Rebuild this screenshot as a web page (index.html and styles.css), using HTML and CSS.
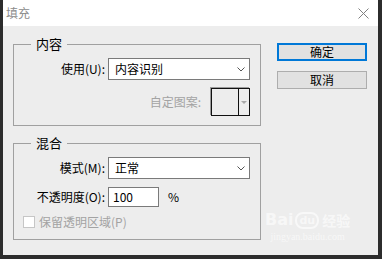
FILE: index.html
```html
<!DOCTYPE html>
<html lang="zh-CN">
<head>
    <meta charset="UTF-8">
    <title>填充</title>
    <link rel="stylesheet" href="styles.css">
</head>
<body>
    <div class="dialog">
        <div class="titlebar">
            <span class="title">填充</span>
            <svg class="close" width="11" height="11" viewBox="0 0 11 11">
                <path d="M0.5 0.5 L10.5 10.5 M10.5 0.5 L0.5 10.5" stroke="#808080" stroke-width="1" fill="none"/>
            </svg>
        </div>

        <div class="content">
            <div class="groups">
                <fieldset class="group">
                    <legend>内容</legend>
                    <div class="row">
                        <span class="label">使用(U):</span>
                        <div class="select">
                            <span>内容识别</span>
                            <svg width="8" height="5" viewBox="0 0 8 5"><path d="M0.5 0.5 L4 4 L7.5 0.5" stroke="#555" fill="none"/></svg>
                        </div>
                    </div>
                    <div class="row row-pattern">
                        <span class="label-muted">自定图案:</span>
                        <div class="swatch">
                            <div class="swatch-color"></div>
                            <div class="swatch-arrow"></div>
                        </div>
                    </div>
                </fieldset>

                <fieldset class="group">
                    <legend>混合</legend>
                    <div class="row">
                        <span class="label">模式(M):</span>
                        <div class="select">
                            <span>正常</span>
                            <svg width="8" height="5" viewBox="0 0 8 5"><path d="M0.5 0.5 L4 4 L7.5 0.5" stroke="#555" fill="none"/></svg>
                        </div>
                    </div>
                    <div class="row">
                        <span class="label">不透明度(O):</span>
                        <div class="number">100</div>
                        <span class="unit">%</span>
                    </div>
                    <div class="check-row">
                        <span class="checkbox"></span>
                        <span class="label-muted">保留透明区域(P)</span>
                    </div>
                </fieldset>
            </div>

            <div class="buttons">
                <button class="btn btn-default">确定</button>
                <button class="btn">取消</button>
            </div>
        </div>

        <div class="watermark">
            <div class="wm-logo"><span>Bai</span><span class="wm-du">du</span><span class="wm-cn">经验</span></div>
            <div class="wm-url">jingyan.baidu.com</div>
        </div>
    </div>
</body>
</html>
```

FILE: styles.css
```css
* {
    box-sizing: border-box;
}

body {
    margin: 0;
    width: 382px;
    height: 259px;
    overflow: hidden;
    background: #2c2c2c;
    font-family: "Noto Sans CJK SC", "Noto Sans", sans-serif;
    font-size: 12px;
    color: #000;
}

.dialog {
    position: relative;
    width: 375px;
    height: 255px;
    margin-left: 3px;
    background: #ededed;
}

.titlebar {
    height: 26px;
    background: #fff;
    display: flex;
    align-items: center;
    justify-content: space-between;
    padding: 0 9px 0 3px;
}

.title {
    color: #8c8c8c;
    line-height: 16px;
}

.content {
    display: flex;
    padding: 10px 0 0 10px;
}

.groups {
    width: 248px;
    display: flex;
    flex-direction: column;
    gap: 9px;
}

.group {
    margin: 0;
    padding: 6px 10px 9px 0;
    border: 1px solid #a0a0a0;
    min-width: 0;
}

.group legend {
    margin-left: 17px;
    padding: 0 5px;
    font-size: 13px;
    line-height: 16px;
}

.row {
    display: flex;
    align-items: center;
}

.row + .row {
    margin-top: 8px;
}

.label {
    width: 91px;
    margin-right: 3px;
    text-align: right;
    line-height: 16px;
    white-space: nowrap;
}

.label-muted {
    color: #a3a3a3;
    line-height: 16px;
    white-space: nowrap;
}

.select {
    width: 142px;
    height: 22px;
    background: #fff;
    border: 1px solid #7a7a7a;
    display: flex;
    align-items: center;
    justify-content: space-between;
    padding: 0 4px 0 6px;
    line-height: 16px;
}

.row-pattern {
    justify-content: flex-end;
}

.row-pattern .label-muted {
    margin-right: 10px;
}

.swatch {
    width: 39px;
    height: 28px;
    display: flex;
    border: 1px solid #111;
    box-shadow: -1px -1px 0 #9a9a9a;
}

.swatch-color {
    width: 27px;
    border-right: 1px solid #111;
}

.swatch-arrow {
    flex: 1;
    display: flex;
    align-items: center;
    justify-content: center;
}

.swatch-arrow::after {
    content: "";
    border-left: 3px solid transparent;
    border-right: 3px solid transparent;
    border-top: 3px solid #a8a8a8;
}

.number {
    width: 51px;
    height: 20px;
    background: #fff;
    border: 1px solid #7a7a7a;
    padding-left: 4px;
    line-height: 18px;
}

.unit {
    margin-left: 9px;
    line-height: 16px;
}

.check-row {
    display: flex;
    align-items: center;
    gap: 4px;
    height: 16px;
    margin-top: 7px;
    padding-left: 9px;
}

.checkbox {
    width: 12px;
    height: 12px;
    background: #fff;
    border: 1px solid #c6c6c6;
}

.buttons {
    margin-left: 16px;
    padding-top: 7px;
    display: flex;
    flex-direction: column;
    gap: 10px;
}

.btn {
    width: 90px;
    height: 18px;
    padding: 0;
    background: #e1e1e1;
    border: 1px solid #adadad;
    font: inherit;
    line-height: 14px;
    color: #000;
}

.btn-default {
    border: 2px solid #0078d7;
}

.watermark {
    position: absolute;
    left: 262px;
    top: 209px;
    color: rgba(255, 255, 255, 0.6);
    text-align: center;
}

.wm-logo {
    display: flex;
    align-items: center;
    font-family: "DejaVu Sans", sans-serif;
    font-weight: bold;
    font-size: 16px;
    line-height: 22px;
}

.wm-du {
    margin-left: 2px;
    padding: 0 2px;
    border: 2px solid rgba(255, 255, 255, 0.6);
    border-radius: 8px;
    font-size: 11px;
    line-height: 13px;
}

.wm-cn {
    margin-left: 3px;
    font-family: "Noto Sans CJK SC", sans-serif;
    font-size: 14px;
}

.wm-url {
    font-family: "Liberation Serif", serif;
    font-size: 10px;
    line-height: 12px;
}
```
